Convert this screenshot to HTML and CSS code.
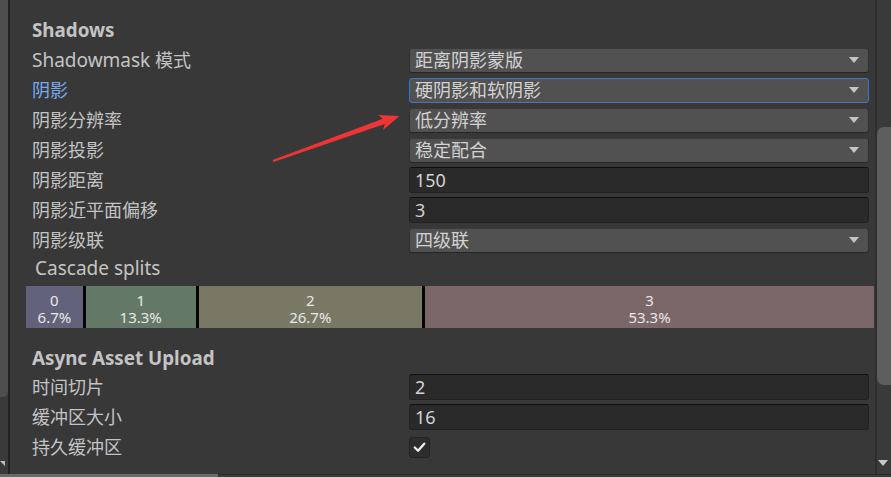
FILE: index.html
```html
<!DOCTYPE html>
<html lang="zh">
<head>
<meta charset="utf-8">
<title>Quality Settings</title>
<link rel="stylesheet" href="styles.css">
</head>
<body>
<div class="screen">
  <div class="lscroll">
    <div class="lthumb"></div>
    <div class="lspacer"></div>
    <div class="larrow"></div>
  </div>
  <div class="lsep"></div>
  <main class="panel">
    <div class="header">Shadows</div>
    <div class="row">
      <div class="label"><span class="lat">Shadowmask</span> 模式</div>
      <div class="field dropdown"><span>距离阴影蒙版</span><i class="tri"></i></div>
    </div>
    <div class="row">
      <div class="label active">阴影</div>
      <div class="field dropdown focused"><span>硬阴影和软阴影</span><i class="tri"></i></div>
    </div>
    <div class="row">
      <div class="label">阴影分辨率</div>
      <div class="field dropdown"><span>低分辨率</span><i class="tri"></i></div>
    </div>
    <div class="row">
      <div class="label">阴影投影</div>
      <div class="field dropdown"><span>稳定配合</span><i class="tri"></i></div>
    </div>
    <div class="row">
      <div class="label">阴影距离</div>
      <div class="field input"><span>150</span></div>
    </div>
    <div class="row">
      <div class="label">阴影近平面偏移</div>
      <div class="field input"><span>3</span></div>
    </div>
    <div class="row">
      <div class="label">阴影级联</div>
      <div class="field dropdown"><span>四级联</span><i class="tri"></i></div>
    </div>
    <div class="row short">
      <div class="label sub"><span class="lat">Cascade splits</span></div>
    </div>
    <div class="cascade">
      <div class="seg s0" style="flex-basis:6.7%"><span>0</span><span>6.7%</span></div>
      <div class="seg s1" style="flex-basis:13.3%"><span>1</span><span>13.3%</span></div>
      <div class="seg s2" style="flex-basis:26.7%"><span>2</span><span>26.7%</span></div>
      <div class="seg s3" style="flex-basis:53.3%"><span>3</span><span>53.3%</span></div>
    </div>
    <div class="header h2">Async Asset Upload</div>
    <div class="row">
      <div class="label">时间切片</div>
      <div class="field input"><span>2</span></div>
    </div>
    <div class="row">
      <div class="label">缓冲区大小</div>
      <div class="field input"><span>16</span></div>
    </div>
    <div class="row">
      <div class="label">持久缓冲区</div>
      <div class="checkbox">
        <svg width="20" height="20" viewBox="0 0 20 20"><polyline points="5,10.5 8.5,14 15,6.5" fill="none" stroke="#f0f0f0" stroke-width="2.4" stroke-linecap="round" stroke-linejoin="round"/></svg>
      </div>
    </div>
  </main>
  <div class="rscroll">
    <div class="rtop"></div>
    <div class="rthumb"></div>
    <div class="rspacer"></div>
    <div class="rarrow"></div>
  </div>
</div>
<div class="hscroll"><div class="hthumb"></div><div class="hrest"></div></div>
<svg class="annot" width="891" height="477" viewBox="0 0 891 477">
  <polygon points="272.5,160 382.8,118.8 378,115 399.5,116 383,130 384.8,124 273.5,162" fill="#ee3434"/>
</svg>
</body>
</html>
```

FILE: styles.css
```css
* { box-sizing: border-box; }
html, body {
  margin: 0;
  padding: 0;
  width: 891px;
  height: 477px;
  overflow: hidden;
  background: #383838;
  font-family: "Noto Sans", "Noto Sans CJK SC", sans-serif;
  color: #c4c4c4;
}
.screen {
  display: flex;
  height: 474px;
}
.lscroll {
  width: 8px;
  display: flex;
  flex-direction: column;
  background: #3a3a3a;
}
.lthumb {
  height: 397px;
  background: #4e4e4e;
  border-bottom-right-radius: 5px;
}
.lspacer { flex: 1; }
.larrow {
  width: 0;
  height: 0;
  border-left: 5px solid transparent;
  border-top: 5px solid #bdbdbd;
  margin: 0 0 8px 0;
}
.lsep {
  width: 2px;
  background: #222222;
}
.panel {
  flex: 1;
  padding: 15px 6px 0 22px;
  display: flex;
  flex-direction: column;
}
.header {
  height: 30px;
  display: flex;
  align-items: center;
  font-weight: 700;
  font-size: 18.8px;
  line-height: 20px;
  color: #c4c4c4;
}
.header.h2 {
  height: 28px;
  margin-top: 16px;
}
.row {
  height: 30px;
  display: flex;
  align-items: center;
  font-size: 18px;
  line-height: 20px;
}
.row.short { height: 25px; }
.label {
  width: 377px;
  flex: none;
  color: #c4c4c4;
  white-space: nowrap;
}
.lat { font-size: 19px; }
.label.active { color: #7aa9f0; }
.label.sub { padding-left: 3px; }
.field {
  flex: 1;
  height: 25px;
  border-radius: 3px;
  display: flex;
  align-items: center;
  padding: 0 9px 0 5px;
  color: #d2d2d2;
  font-size: 18px;
  line-height: 20px;
}
.field span { flex: 1; white-space: nowrap; }
.dropdown {
  background: #515151;
  border: 1px solid #303030;
  border-top-color: #3a3a3a;
  border-bottom-color: #262626;
}
.dropdown.focused {
  border: 1px solid #3b79c7;
}
.tri {
  width: 0;
  height: 0;
  border-left: 5px solid transparent;
  border-right: 5px solid transparent;
  border-top: 6px solid #c4c4c4;
}
.input {
  height: 26px;
  background: #2a2a2a;
  border: 1px solid #212121;
  border-top-color: #0f0f0f;
}
.checkbox {
  width: 21px;
  height: 21px;
  background: #2d2d2d;
  border: 1px solid #232323;
  border-radius: 3px;
  display: flex;
  align-items: center;
  justify-content: center;
}
.checkbox svg { display: block; }
.cascade {
  display: flex;
  height: 42px;
  margin: 6px -5px 0 -6px;
}
.seg {
  display: flex;
  flex-direction: column;
  align-items: center;
  padding-top: 6px;
  font-size: 15px;
  line-height: 17px;
  color: #e8e8e8;
  flex-grow: 0;
  flex-shrink: 0;
}
.seg span { display: block; height: 17px; }
.seg + .seg { border-left: 3px solid #050505; }
.s0 { background: #62627a; }
.s1 { background: #637866; }
.s2 { background: #787865; }
.s3 { background: #7b6767; flex-grow: 1; flex-shrink: 1; }
.rscroll {
  width: 16px;
  border-left: 2px solid #2e2e2e;
  background: #3a3a3a;
  display: flex;
  flex-direction: column;
  align-items: flex-end;
}
.rtop { height: 127px; }
.rthumb {
  width: 14px;
  height: 258px;
  background: #5e5e5e;
  border-radius: 7px 0 0 7px;
}
.rspacer { flex: 1; }
.rarrow {
  width: 0;
  height: 0;
  border-left: 5px solid transparent;
  border-right: 5px solid transparent;
  border-top: 6px solid #c8c8c8;
  margin: 0 3px 8px 0;
}
.hscroll {
  height: 3px;
  display: flex;
  background: #3c3c3c;
}
.hthumb { width: 218px; background: #6a6a6a; }
.hrest { flex: 1; border-top: 1px solid #2a2a2a; }
.annot {
  position: absolute;
  left: 0;
  top: 0;
  pointer-events: none;
}
```
